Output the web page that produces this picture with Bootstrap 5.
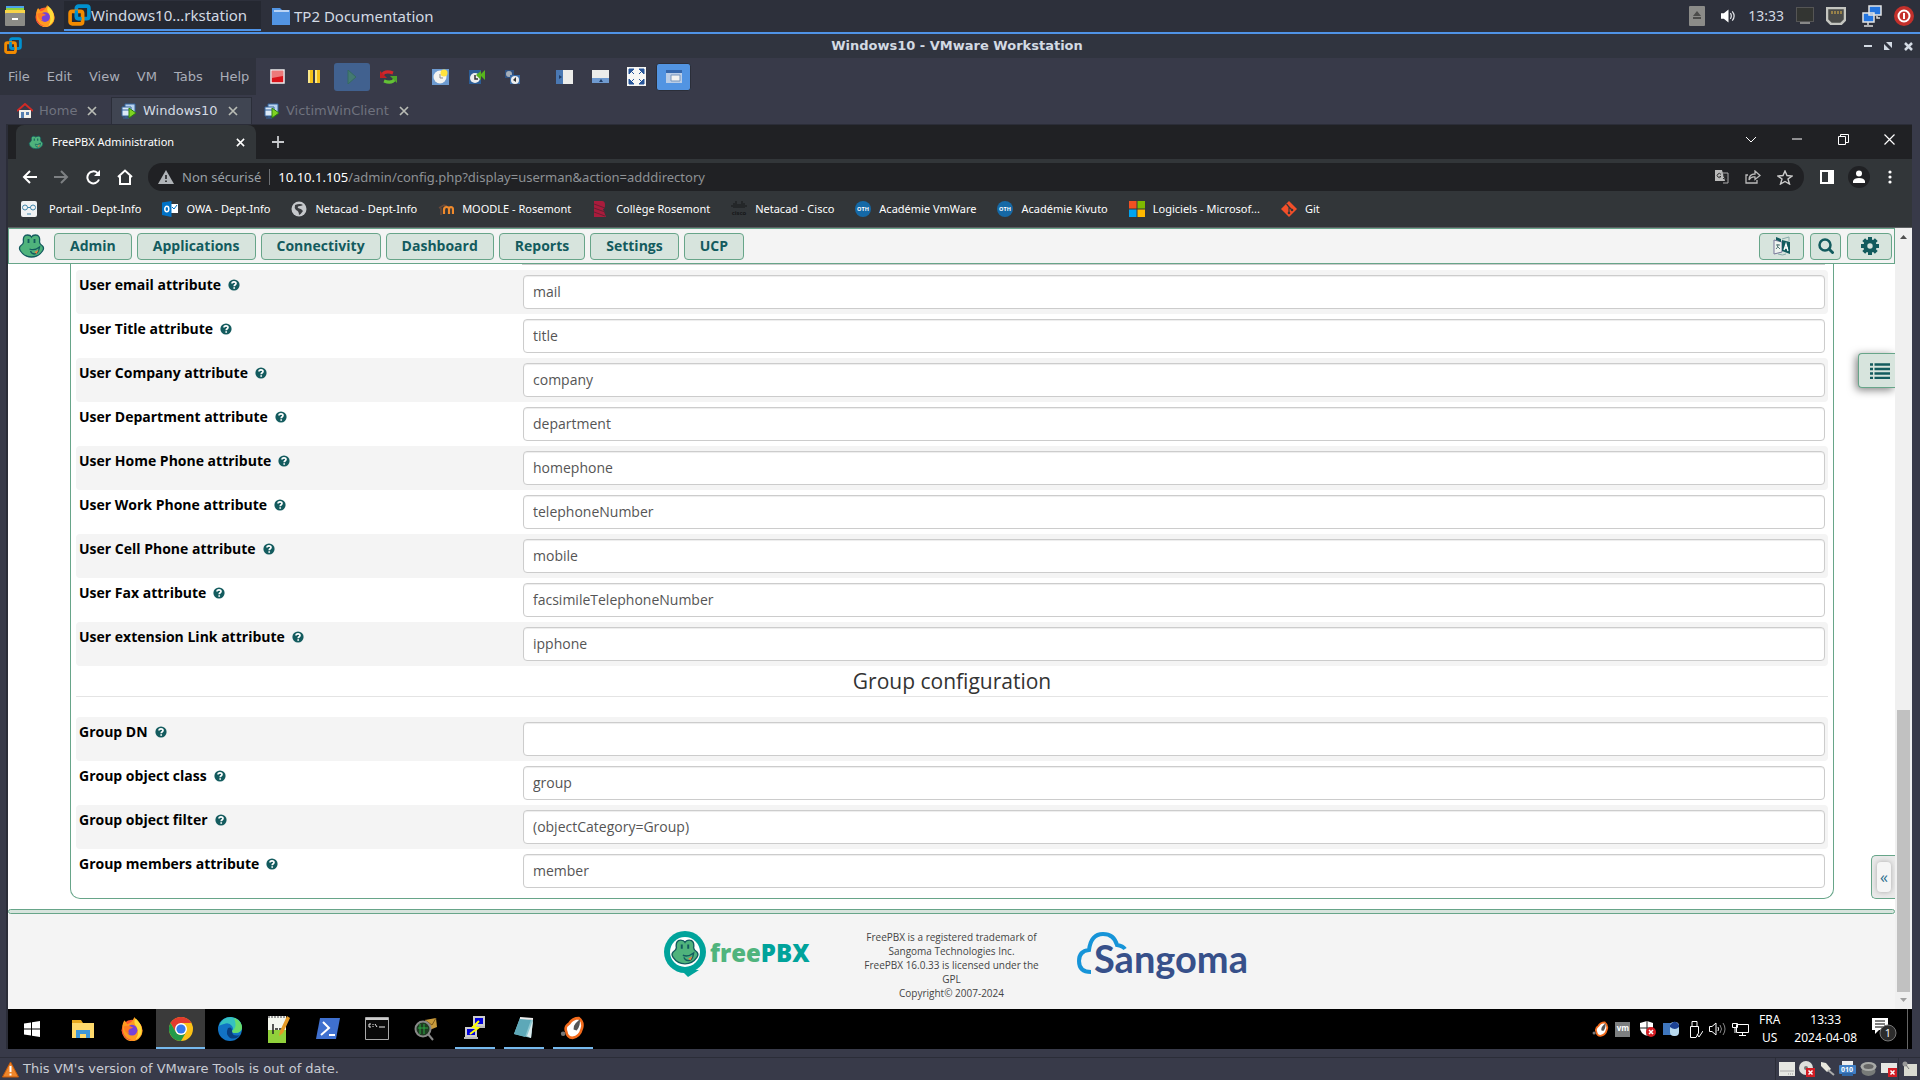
<!DOCTYPE html>
<html lang="fr">
<head>
<meta charset="utf-8">
<meta name="viewport" content="width=device-width, initial-scale=1">
<title>Windows10 - VMware Workstation</title>
<link href="https://cdn.jsdelivr.net/npm/bootstrap@5.3.0/dist/css/bootstrap.min.css" rel="stylesheet">
<style>
:root{--host:"DejaVu Sans",sans-serif;--web:"Open Sans","Noto Sans",sans-serif;--seg:"Noto Sans","Open Sans",sans-serif;--green:#67a589;--mint:#d7e4dd;--teal:#135b5e}
body{background:#383a49;font-family:var(--host);font-size:13px;line-height:20px;color:#d3dae3;overflow:hidden}
svg{display:block;flex:none}
a{color:inherit;text-decoration:none}
button{border:0;background:none;padding:0;color:inherit;font:inherit;display:flex;align-items:center;justify-content:center;flex:none}
.desk{min-height:100vh}
/* host panel */
.panel{height:34px;background:#2d303b;border-bottom:2px solid #4f93e6;font:15px/20px "Noto Sans",sans-serif;padding:0 6px 0 4px}
.panel time{font-size:14px}
.panel-task{width:197px;height:30px;background:#252831;border-bottom:2px solid #4f93e6;padding-left:4px}
.tray{gap:12px}
.titlebar{height:24px;background:#30343f;padding:0 7px 0 4px;font-weight:bold}
.titlebar span{padding-left:28px}
.menus{height:37px;width:256px;background:#2f323d;color:#a9adb8;padding-left:8px;gap:17px}
.tool{width:36px;height:28px;border-radius:3px}
.tool-run{background:#41618f;margin-left:2px}
.tool-on{background:#5294e2;border:1px solid #2b2e39;width:35px;margin-left:2px}
.tabs-vm{height:29px;padding-top:2px;color:#6f727e}
.vmtab{height:27px;gap:6px;padding-left:17px}
.vmtab:first-child{width:111px}
.vmtab button{margin-left:4px;color:#b9bcb5}
.vmtab-on{width:141px;background:#404552;border:1px solid #2b2e39;border-bottom:0;color:#d3dae3;padding-left:9px}
/* guest screen */
.guest{margin:0 8px 0 6px;border-left:2px solid #2b2d38;border-top:1px solid #2b2d38;font-family:var(--seg)}
.strip{height:34px;background:#202124;padding-left:8px;color:#fff;font-size:11px}
.ctab{width:240px;height:34px;background:#323639;border-radius:8px 8px 0 0;padding:0 11px 0 12px}
.wbtn{width:46px;height:28px}
.addr{height:36px;background:#323639;padding-left:11px;color:#fff}
.navbtn{width:20px;margin-right:12px}
.omni{height:28px;border-radius:14px;background:#202124;color:#9aa0a6;padding:0 11px 0 10px;margin-left:1px}
.omni-sep{border-left:1px solid #6c6f73;height:16px}
.omni-url{font:13px/20px var(--seg);color:#8e9195}
.avatar{margin:0 18px 0 14px}
.marks{height:33px;background:#323639;color:#fff;font-size:11px;padding:0 14px 4px 13px;gap:21px;border-bottom:1px solid #5d6063}
.marks a{display:flex;align-items:center;gap:8px;white-space:nowrap}
.view{background:#fff;color:#444;font:14px/20px var(--web);overflow:hidden}
.fnav{height:36px;background:#f4f4f4;border:1px solid var(--green);padding:0 2px 0 9px;gap:5px}
.fbtn{height:27px;border:1px solid var(--green);border-radius:4px;background:var(--mint);color:var(--teal);font-weight:700;padding:0 15px}
.fbtn-sq{padding:0;width:45px;margin-left:1px}
.fbtn-find{width:31px}
.sheet{padding:0 61px 0 62px}
.pane{border:1px solid var(--green);border-top:0;border-radius:0 0 10px 10px;padding:0 5px}
.frow{height:44px;border-radius:4px;color:#000}
.frow:nth-child(odd of .frow){background:#f4f4f4}
.frow label{font-weight:700;padding:5px 0 0 3px;display:flex;gap:7px;align-items:center;height:25px}
.frow .col-9{padding:5px 3px 0 9px}
.frow input{height:34px;border:1px solid #ccc;border-radius:4px;padding:5px 9px 7px;font:14px/20px var(--web);color:#555;box-shadow:inset 0 1px 1px rgba(0,0,0,.075)}
.cut{height:6px;padding:0 3px}
.cut div{border-bottom:1px solid #ccc;height:1px}
.gtitle{font-size:21px;font-weight:400;color:#333;border-bottom:1px solid #e4e4e4;height:31px;margin:0 0 20px;line-height:30px}
.pane::after{content:"";display:block;height:5px}
.band{height:5px;background:var(--mint);border:1px solid var(--green);border-radius:3px;margin-top:10px}
.foot{background:#f4f4f4;flex:1;padding:16px 0 0 8px}
.legal{width:180px;font-size:10px;line-height:14px;text-align:center;margin:0 35px 0 51px}
.sb{width:17px;background:#f0f0f0;padding:7px 2px}
.thumb{background:#c1c1c1;height:282px;margin-bottom:6px}
.listbtn{right:0;top:125px;width:37px;height:35px;border:1px solid var(--green);border-right:0;border-radius:4px 0 0 4px;background:var(--mint);color:var(--teal);box-shadow:-2px 2px 8px rgba(0,0,0,.5);padding-left:6px}
.side{right:0;bottom:110px;width:24px;height:44px;border:1px solid var(--green);border-right:0;border-radius:5px 0 0 5px;background:#e9e9e9}
.side button{width:14px;height:30px;border-radius:4px;background:#f5f5f5;color:#2c6f8e;margin:6px 5px;box-shadow:0 0 5px #aaa;font-size:16px}
.winbar{height:40px;background:#000;color:#fff;font-size:12px;line-height:18px}
.app{width:49px;height:40px;border-bottom:2px solid transparent;padding-top:2px}
.app-start{width:48px;margin-right:2px}
.app-open span{border-bottom:2px solid #76b9ed;width:40px;height:40px;display:flex;align-items:center;justify-content:center}
.app-on{background:#3a3a3a;border-bottom-color:#76b9ed}
.wintray{gap:6px}
.clock{margin-right:8px}
.peek{border-left:1px solid #666}
.status{height:23px;border-top:1px solid #2b2d38;margin-top:8px;padding:0 3px 0 2px;color:#c8ccd4}
.cellbox{border-left:1px solid #2b2d38;height:22px;gap:4px;padding-left:3px}
</style>
<script src="https://cdn.jsdelivr.net/npm/bootstrap@5.3.0/dist/js/bootstrap.bundle.min.js"></script>
</head>
<body>
<svg width="0" height="0" class="position-absolute" aria-hidden="true">
<defs>
<symbol id="q" viewBox="0 0 12 12"><circle cx="6" cy="6" r="5.6" fill="#135b5e"/><path d="M4 4.6C4 2.4 8 2.2 8 4.5 8 5.8 6.200 5.700 6.200 7.200M6.200 8.200v1.500" fill="none" stroke="#fff" stroke-width="1.700"/></symbol>
<symbol id="vmw" viewBox="0 0 22 22"><rect x="8" y="2" width="12" height="12" rx="2" fill="none" stroke="#0091d0" stroke-width="3.500"/><rect x="2" y="7" width="12" height="12" rx="2" fill="none" stroke="#f38b00" stroke-width="3.500"/><path d="M8 6v6q0 2 2 2h3" fill="none" stroke="#0091d0" stroke-width="3"/></symbol>
<symbol id="ff" viewBox="0 0 20 20"><circle cx="10" cy="11" r="8.700" fill="#ff5a2c"/><path d="M2 7Q3 3 4 3l2 3q4-1 6-6 1 3 4 5 4 5 2 10-2 4-6 5-6 1-9-4z" fill="#ff9a1f"/><path d="M13 1q6 5 5 12-1 4-5 6 4-6 0-12-2-3 0-6z" fill="#ffdc3a"/><circle cx="10" cy="11" r="4.500" fill="#7542d8"/><path d="M3 8q4-2 8 1l-3 1q-2 2 0 4-4 0-5-6z" fill="#ff7a24"/><path d="M2 12q1 7 9 7.500-7-1-9-7.500z" fill="#e5195f"/></symbol>
<symbol id="frog" viewBox="0 0 26 26"><path d="M5 9Q4 2 9 2q3 0 4 2 1-2 4-2 5 0 4 7 0 2 3 4 2 2 0 5-4 6-11 6T2 18q-2-3 0-5 3-2 3-4z" fill="#4fb37c" stroke="#135b5e" stroke-width="1.300"/><path d="M10 6v4M16 6v4" stroke="#135b5e" stroke-width="1.800"/><path d="M11 16q5 2 10-2-1 7-5 7-3 0-4-3" fill="none" stroke="#135b5e" stroke-width="1.300"/><path d="M16 19l4-2-2 4z" fill="#f08040"/></symbol>
<symbol id="vmrun" viewBox="0 0 16 16"><path d="M4 1h10v9H4z" fill="#b8d2ee" stroke="#34649e"/><path d="M1 4h9v9H1z" fill="#dbe9f7" stroke="#34649e"/><path d="M1 7h9M5 13v2M2 15h6" stroke="#34649e"/><path d="M8 5l7 5-7 5z" fill="#7fd321" stroke="#2c7d12"/></symbol>
<symbol id="x" viewBox="0 0 10 10"><path d="M1 1l8 8M9 1L1 9" fill="none" stroke="currentColor" stroke-width="1.700"/></symbol>
<symbol id="boar" viewBox="0 0 24 24"><path d="M6 15Q4 10 9 7q3-5 9-5 5 4 3 10-2 8-9 9-5 0-6-6z" fill="#fff" stroke="#f26a1b" stroke-width="2.500"/><path d="M15 7l4-4q1 6-3 11l-3-1q0-4 2-6z" fill="#555"/><circle cx="3" cy="17" r="2.200" fill="#777"/></symbol>
<symbol id="oth" viewBox="0 0 16 16"><circle cx="8" cy="8" r="8" fill="#1569a6"/><text x="8" y="10" text-anchor="middle" font-size="5.500" font-weight="700" font-family="Open Sans" fill="#fff">OTH</text></symbol>
</defs>
</svg>
<div class="desk d-flex flex-column">

<header class="panel d-flex align-items-center">
  <svg width="22" height="22" viewBox="0 0 22 22"><path d="M2 1h18v4H2z" fill="#4aa0e8"/><path d="M2 3h18v4H2z" fill="#8ed13f"/><path d="M1 5h20v5H1z" fill="#f7d348"/><rect x="1" y="8" width="20" height="13" rx="1" fill="#8b8b87"/><path d="M8 14h6" stroke="#fff" stroke-width="2"/></svg>
  <svg class="mx-2" width="22" height="22"><use href="#ff"/></svg>
  <a href="#" class="panel-task d-flex align-items-center"><svg width="23" height="23"><use href="#vmw"/></svg><span>Windows10...rkstation</span></a>
  <a href="#" class="d-flex align-items-center ms-2"><svg width="25" height="20" viewBox="0 0 25 20"><path d="M3 2h8l2 2h8v15H3z" fill="#5294e2"/><path d="M5 5h15" stroke="#dce9fa" stroke-width="1.500"/></svg><span>TP2 Documentation</span></a>
  <div class="tray ms-auto d-flex align-items-center">
    <svg width="16" height="20"><rect width="16" height="20" rx="1" fill="#8b8b88"/><path d="M4 10h8L8 5zM4 11h8v2H4z" fill="#4c4c4a"/></svg>
    <svg class="ms-1" width="15" height="14" viewBox="0 0 16 14"><path d="M0 4h3l5-4v14L3 10H0z" fill="#fff"/><path d="M10 4q2 3 0 6M12 2q4 5 0 10" fill="none" stroke="#e4e6ea" stroke-width="1.300"/></svg>
    <time>13:33</time>
    <svg width="18" height="18"><rect x=".5" y=".5" width="17" height="14" fill="#333532" stroke="#555"/><path d="M4 16h10" stroke="#888" stroke-width="2"/></svg>
    <svg width="20" height="18"><path d="M1 1h18v12l-4 4H5l-4-4z" fill="#4a4b49" stroke="#c4c5c0" stroke-width="2.500"/><path d="M6 4v3M9 4v3M12 4v3M15 4v3" stroke="#e5b94b"/></svg>
    <svg class="ms-1" width="20" height="22"><path d="M7 1h12v9H7zM1 8h11v9H1z" fill="#2475df" stroke="#e5e5e5" stroke-width="1.500"/><path d="M6 17v3M2 21h9M15 11v2h3" stroke="#ddd" stroke-width="1.500"/></svg>
    <svg width="20" height="22"><circle cx="10" cy="11" r="10" fill="#c4302b"/><circle cx="10" cy="11" r="5.500" fill="none" stroke="#fff" stroke-width="2"/><path d="M10 8v6" stroke="#fff" stroke-width="2"/></svg>
  </div>
</header>

<div class="titlebar d-flex align-items-center">
  <svg width="18" height="18"><use href="#vmw"/></svg>
  <span class="flex-fill text-center">Windows10 - VMware Workstation</span>
  <button aria-label="Minimize"><svg width="8" height="10"><path d="M0 5h8" stroke="#d3dae3" stroke-width="2"/></svg></button>
  <button class="ms-2 ps-1" aria-label="Restore"><svg width="8" height="8"><path d="M2 0h6v6zM0 2v6h6z" fill="#d3dae3"/></svg></button>
  <button class="ms-2 ps-1" aria-label="Close"><svg width="9" height="9"><path d="M1 1l7 7M8 1L1 8" stroke="#d3dae3" stroke-width="2.500"/></svg></button>
</div>

<div class="d-flex align-items-center">
  <nav class="menus d-flex align-items-center"><a href="#">File</a><a href="#">Edit</a><a href="#">View</a><a href="#">VM</a><a href="#">Tabs</a><a href="#">Help</a></nav>
  <button class="tool ms-1" aria-label="Stop"><svg width="16" height="16"><path d="M1 1h13v13H1z" fill="#d9131a" stroke="#eee" stroke-width="1.500"/><path d="M2 2h11v5l-11 2z" fill="#ec7a7a"/></svg></button>
  <button class="tool" aria-label="Pause"><svg width="14" height="14"><path d="M1 0h5v13H1zM8 0h5v13H8z" fill="#f5c21a"/><path d="M1 0h2v13H1zM8 0h2v13H8z" fill="#fbe88a"/></svg></button>
  <button class="tool tool-run" aria-label="Play"><svg width="10" height="14"><path d="M1 0l8 7-8 7z" fill="#447a71" stroke="#356a62"/></svg></button>
  <button class="tool" aria-label="Restart"><svg width="17" height="16" viewBox="0 0 17 16"><path d="M2 6q3-5 11-2" fill="none" stroke="#d3262b" stroke-width="3"/><path d="M0 2v7h7z" fill="#c11f24"/><path d="M15 10q-3 5-11 2" fill="none" stroke="#63c136" stroke-width="3"/><path d="M17 14V7h-7z" fill="#4fa52a"/></svg></button>
  <button class="tool ms-3" aria-label="Snapshot"><svg width="17" height="16"><path d="M0 0h17v16H0z" fill="#6d9bd1"/><circle cx="8" cy="8" r="6.500" fill="#f3f3f0"/><path d="M8 5v4h3" fill="none" stroke="#888"/><circle cx="12" cy="4" r="3.500" fill="#ffe23d"/></svg></button>
  <button class="tool" aria-label="Revert"><svg width="17" height="16"><path d="M1 1h12v14H1z" fill="#2c5d96"/><circle cx="7" cy="9" r="5" fill="#eee"/><path d="M7 6v4h3" fill="none" stroke="#333" stroke-width="1.500"/><path d="M17 1v10l-4-4v4L8 6l5-4v3z" fill="#57b51d"/></svg></button>
  <button class="tool" aria-label="Snapshots"><svg width="17" height="16"><path d="M1 1h9v8H1z" fill="#2c4f80"/><circle cx="5" cy="5" r="3" fill="#a5aeb8"/><path d="M6 6h10v9H6z" fill="#3a6ca8"/><circle cx="11" cy="11" r="4" fill="#eee"/><path d="M12 8l-3 3 3 2z" fill="#333"/></svg></button>
  <button class="tool ms-3" aria-label="Library"><svg width="17" height="14"><path d="M0 0h7v14H0z" fill="#4a78b3"/><path d="M7 0h10v14H7z" fill="#ececea"/><path d="M3 5l3 2-3 2z" fill="#203c65"/></svg></button>
  <button class="tool" aria-label="Thumbnails"><svg width="17" height="14"><path d="M0 0h17v8H0z" fill="#ececea"/><path d="M0 8h17v5H0z" fill="#6f9ad0"/><path d="M7 12h4l-2-3z" fill="#203c65"/></svg></button>
  <button class="tool" aria-label="Full screen"><svg width="19" height="19"><path d="M0 0h19v19H0z" fill="#f7f7f5"/><path d="M2 2h5L2 7zM17 2v5l-5-5zM2 17v-5l5 5zM17 17h-5l5-5zM4 4l3 3M15 4l-3 3M4 15l3-3M15 15l-3-3" fill="#28579b" stroke="#28579b"/></svg></button>
  <button class="tool tool-on" aria-label="Unity"><svg width="16" height="13"><path d="M0 0h16v13H0z" fill="#b9cce6"/><path d="M0 0h16v3H0z" fill="#3567ac"/><path d="M5 5h9v6H5z" fill="#f3f3f0" stroke="#7795bd"/></svg></button>
</div>

<div class="tabs-vm d-flex">
  <div class="vmtab d-flex align-items-center"><svg width="16" height="16"><path d="M2 7h12v8H2z" fill="#f2f0ea"/><path d="M0 8l8-7 8 7" fill="none" stroke="#d02a26" stroke-width="2"/><path d="M4 9h3v6H4zM9 9h3v3H9z" fill="#567fb0"/></svg><span>Home</span><button aria-label="Close Home"><svg width="10" height="10"><use href="#x"/></svg></button></div>
  <div class="vmtab vmtab-on d-flex align-items-center"><svg width="16" height="16"><use href="#vmrun"/></svg><span>Windows10</span><button aria-label="Close Windows10"><svg width="10" height="10"><use href="#x"/></svg></button></div>
  <div class="vmtab d-flex align-items-center ps-2 ms-1"><svg width="16" height="16"><use href="#vmrun"/></svg><span>VictimWinClient</span><button aria-label="Close VictimWinClient"><svg width="10" height="10"><use href="#x"/></svg></button></div>
</div>

<main class="guest d-flex flex-column flex-fill">
  <div class="strip d-flex align-items-center">
    <div class="ctab d-flex align-items-center"><svg width="16" height="15"><use href="#frog"/></svg><span class="ps-2 flex-fill">FreePBX Administration</span><button aria-label="Close tab"><svg width="9" height="9"><use href="#x"/></svg></button></div>
    <button class="ms-3" aria-label="New tab"><svg width="12" height="12"><path d="M6 0v12M0 6h12" stroke="#c8cacd" stroke-width="1.800"/></svg></button>
    <div class="ms-auto d-flex align-self-start">
      <button class="wbtn" aria-label="Search tabs"><svg width="10" height="7"><path d="M0 1l5 5 5-5" fill="none" stroke="#fff"/></svg></button>
      <button class="wbtn" aria-label="Minimize window"><svg width="10" height="2"><path d="M0 1h10" stroke="#fff"/></svg></button>
      <button class="wbtn" aria-label="Restore window"><svg width="11" height="11"><path d="M.5 2.500h7v8h-7zM2.500 2.500v-2h8v8h-3" fill="none" stroke="#fff"/></svg></button>
      <button class="wbtn" aria-label="Close window"><svg width="11" height="11"><path d="M.5.5l10 10M10.500.5l-10 10" stroke="#fff" stroke-width="1.200"/></svg></button>
    </div>
  </div>
  <div class="addr d-flex align-items-center">
    <button class="navbtn" aria-label="Back"><svg width="15" height="14"><path d="M15 7H2M8 1L2 7l6 6" fill="none" stroke="#fff" stroke-width="2"/></svg></button>
    <button class="navbtn" aria-label="Forward"><svg width="15" height="14"><path d="M0 7h13M7 1l6 6-6 6" fill="none" stroke="#7d8083" stroke-width="2"/></svg></button>
    <button class="navbtn" aria-label="Reload"><svg width="16" height="16"><path d="M14 10.500A6 6 0 1 1 12.500 4" fill="none" stroke="#fff" stroke-width="2"/><path d="M15 1v6H9z" fill="#fff"/></svg></button>
    <button class="navbtn" aria-label="Home"><svg width="16" height="16"><path d="M1 8l7-6.500L15 8M3 7v8h10V7" fill="none" stroke="#fff" stroke-width="2"/></svg></button>
    <div class="omni d-flex align-items-center flex-fill">
      <svg width="16" height="14"><path d="M8 0l8 14H0z" fill="#b0b4b8"/><path d="M8 5v4M8 10.500v1.500" stroke="#202124" stroke-width="1.600"/></svg>
      <span class="ps-2 pe-2">Non sécurisé</span><span class="omni-sep pe-2"></span>
      <span class="omni-url flex-fill"><span class="text-white">10.10.1.105</span>/admin/config.php?display=userman&amp;action=adddirectory</span>
      <button aria-label="Translate"><svg width="14" height="14"><path d="M0 0h7l3 11H0z" fill="#bbb"/><path d="M6 3h7v10H8" fill="none" stroke="#aaa"/><path d="M6 4.500a2 2 0 1 0 0 2H4.500M8 6h4M10 5q0 3-2 4M9 7l3 3" fill="none" stroke="#333"/></svg></button>
      <button class="ms-3" aria-label="Share"><svg width="16" height="14"><path d="M3 5H1v8h11v-3" fill="none" stroke="#bbb" stroke-width="1.300"/><path d="M4 10q0-6 6-6V1l5 4.500-5 4V7q-4-1-6 3z" fill="none" stroke="#bbb" stroke-width="1.300"/></svg></button>
      <button class="ms-3" aria-label="Bookmark"><svg width="16" height="15"><path d="M8 1l2 4.500 5 .5-4 3 1.500 5L8 11.500 3.500 14 5 9 1 6l5-.5z" fill="none" stroke="#ccc" stroke-width="1.400"/></svg></button>
    </div>
    <button class="ms-3" aria-label="Side panel"><svg width="14" height="14"><path d="M1 1h12v12H1z" fill="none" stroke="#fff" stroke-width="2"/><path d="M8 1h5v12H8z" fill="#fff"/></svg></button>
    <button class="avatar" aria-label="Profile"><svg width="22" height="22"><circle cx="11" cy="11" r="11" fill="#202124"/><circle cx="11" cy="7.500" r="3" fill="#fff"/><path d="M5 17v-2q1-3 6-3t6 3v2z" fill="#fff"/></svg></button>
    <button class="me-3 pe-1" aria-label="Menu"><svg width="4" height="16"><g fill="#fff"><circle cx="2" cy="3" r="1.600"/><circle cx="2" cy="8" r="1.600"/><circle cx="2" cy="13" r="1.600"/></g></svg></button>
  </div>
  <nav class="marks d-flex align-items-center">
    <a href="#"><svg width="16" height="16"><rect width="16" height="16" rx="2" fill="#f0f2f3"/><g fill="none" stroke="#3f86ab"><circle cx="4" cy="6.500" r="2.500"/><circle cx="12" cy="6.500" r="2.500"/><path d="M6.500 6.500h3M6 13h4"/></g></svg><span class="ps-1">Portail - Dept-Info</span></a>
    <a href="#"><svg width="16" height="16"><path d="M7 3h9v9H7z" fill="#fff"/><path d="M0 1.500L9.500 0v16L0 14z" fill="#0072c6"/><path d="M10 6l2 2 3-4" fill="none" stroke="#0072c6"/><ellipse cx="4.800" cy="8" rx="2" ry="2.700" fill="none" stroke="#fff" stroke-width="1.500"/></svg>OWA - Dept-Info</a>
    <a href="#"><svg width="16" height="16"><circle cx="8" cy="8" r="7.500" fill="#c5c8cb"/><path d="M4 4q5-2 8 0-2 1-3 1-3 0-2 2 4 1 5 3-2 3-4 4 0-4-3-5-2-2-1-5z" fill="#3a3d40"/></svg>Netacad - Dept-Info</a>
    <a href="#"><svg width="16" height="16"><path d="M1 7l5-3 3 1M3 7v7" fill="none" stroke="#6a4a3a" stroke-width="1.500"/><path d="M6 13V9q0-3 2.500-3T11 8v5M11 9q0-3 2-3t2 3v4" fill="none" stroke="#f08a2c" stroke-width="2.200"/></svg>MOODLE - Rosemont</a>
    <a href="#"><svg width="16" height="16"><path d="M2 0h8q3 0 3 4t-2 4l3 8H2z" fill="#a91c3c"/><path d="M2 3l11 4M2 7l11 4M2 11l11 4" stroke="#681f33"/></svg>Collège Rosemont</a>
    <a href="#"><svg width="16" height="16"><path d="M1 4v2M3 2v5M5 0v7M7 3v4M9 3v4M11 0v7M13 2v5M15 4v2" stroke="#16181a"/><text x="8" y="14" font-size="6" font-weight="700" font-family="Open Sans" text-anchor="middle" fill="#16181a">cisco</text></svg>Netacad - Cisco</a>
    <a href="#"><svg width="16" height="16"><use href="#oth"/></svg>Académie VmWare</a>
    <a href="#"><svg width="16" height="16"><use href="#oth"/></svg>Académie Kivuto</a>
    <a href="#"><svg width="16" height="16"><path d="M0 0h7.500v7.500H0z" fill="#f25022"/><path d="M8.500 0H16v7.500H8.500z" fill="#7fba00"/><path d="M0 8.500h7.500V16H0z" fill="#00a4ef"/><path d="M8.500 8.500H16V16H8.500z" fill="#ffb900"/></svg>Logiciels - Microsof...</a>
    <a href="#"><svg width="16" height="16"><path d="M8 0l8 8-8 8-8-8z" fill="#f34f29"/><path d="M5.500 3l2.500 3v6M8 6l3 3" stroke="#323639" fill="none" stroke-width="1.200"/><circle cx="8" cy="12" r="1.300" fill="#323639"/><circle cx="11" cy="9" r="1.300" fill="#323639"/></svg>Git</a>
  </nav>

  <div class="d-flex flex-fill">
    <div class="view position-relative d-flex flex-column flex-fill">
      <nav class="fnav d-flex align-items-center">
        <svg class="me-1" width="27" height="26"><use href="#frog"/></svg>
        <button class="fbtn">Admin</button><button class="fbtn">Applications</button><button class="fbtn">Connectivity</button><button class="fbtn">Dashboard</button><button class="fbtn">Reports</button><button class="fbtn">Settings</button><button class="fbtn">UCP</button>
        <button class="fbtn fbtn-sq ms-auto" aria-label="Language"><svg width="18" height="20"><path d="M1 4l8 2v10l-8 2z" fill="#eef3ef" stroke="#779"/><path d="M3 1l5 2v3L3 4zM9 4l8 2v12l-8-3z" fill="#135b5e"/><path d="M3 9h4M5 8q0 4-2 5M4 10l3 3" fill="none" stroke="#577"/><path d="M11 14l2-6 2 7M12 12h3" fill="none" stroke="#fff" stroke-width="1.300"/><path d="M5 18q5 2 8 0M9 3l7-2v4" fill="none" stroke="#8aa"/></svg></button>
        <button class="fbtn fbtn-sq fbtn-find" aria-label="Search"><svg width="16" height="16"><circle cx="7" cy="7" r="5.500" fill="none" stroke="#135b5e" stroke-width="2.500"/><path d="M11 11l4.500 4.500" stroke="#135b5e" stroke-width="2.800"/></svg></button>
        <button class="fbtn fbtn-sq" aria-label="Settings menu"><svg width="18" height="18" viewBox="-9 -9 18 18"><circle r="4.700" fill="none" stroke="#135b5e" stroke-width="4"/><g stroke="#135b5e" stroke-width="4"><path d="M0-9v4M0 9V5M-9 0h4M9 0H5M-6.300-6.300l3 3M6.300-6.300l-3 3M-6.300 6.300l3-3M6.300 6.300l-3-3"/></g></svg></button>
      </nav>
      <form class="sheet"><div class="pane">
        <div class="row g-0"><div class="col-9 offset-3 cut ps-2"><div></div></div></div>
        <div class="row g-0 frow"><div class="col-3"><label for="a1">User email attribute <svg width="12" height="12"><use href="#q"/></svg></label></div><div class="col-9"><input id="a1" class="w-100" value="mail"></div></div>
        <div class="row g-0 frow"><div class="col-3"><label for="a2">User Title attribute <svg width="12" height="12"><use href="#q"/></svg></label></div><div class="col-9"><input id="a2" class="w-100" value="title"></div></div>
        <div class="row g-0 frow"><div class="col-3"><label for="a3">User Company attribute <svg width="12" height="12"><use href="#q"/></svg></label></div><div class="col-9"><input id="a3" class="w-100" value="company"></div></div>
        <div class="row g-0 frow"><div class="col-3"><label for="a4">User Department attribute <svg width="12" height="12"><use href="#q"/></svg></label></div><div class="col-9"><input id="a4" class="w-100" value="department"></div></div>
        <div class="row g-0 frow"><div class="col-3"><label for="a5">User Home Phone attribute <svg width="12" height="12"><use href="#q"/></svg></label></div><div class="col-9"><input id="a5" class="w-100" value="homephone"></div></div>
        <div class="row g-0 frow"><div class="col-3"><label for="a6">User Work Phone attribute <svg width="12" height="12"><use href="#q"/></svg></label></div><div class="col-9"><input id="a6" class="w-100" value="telephoneNumber"></div></div>
        <div class="row g-0 frow"><div class="col-3"><label for="a7">User Cell Phone attribute <svg width="12" height="12"><use href="#q"/></svg></label></div><div class="col-9"><input id="a7" class="w-100" value="mobile"></div></div>
        <div class="row g-0 frow"><div class="col-3"><label for="a8">User Fax attribute <svg width="12" height="12"><use href="#q"/></svg></label></div><div class="col-9"><input id="a8" class="w-100" value="facsimileTelephoneNumber"></div></div>
        <div class="row g-0 frow"><div class="col-3"><label for="a9">User extension Link attribute <svg width="12" height="12"><use href="#q"/></svg></label></div><div class="col-9"><input id="a9" class="w-100" value="ipphone"></div></div>
        <section>
        <h3 class="gtitle text-center">Group configuration</h3>
        <div class="row g-0 frow"><div class="col-3"><label for="b1">Group DN <svg width="12" height="12"><use href="#q"/></svg></label></div><div class="col-9"><input id="b1" class="w-100" value=""></div></div>
        <div class="row g-0 frow"><div class="col-3"><label for="b2">Group object class <svg width="12" height="12"><use href="#q"/></svg></label></div><div class="col-9"><input id="b2" class="w-100" value="group"></div></div>
        <div class="row g-0 frow"><div class="col-3"><label for="b3">Group object filter <svg width="12" height="12"><use href="#q"/></svg></label></div><div class="col-9"><input id="b3" class="w-100" value="(objectCategory=Group)"></div></div>
        <div class="row g-0 frow"><div class="col-3"><label for="b4">Group members attribute <svg width="12" height="12"><use href="#q"/></svg></label></div><div class="col-9"><input id="b4" class="w-100" value="member"></div></div>
        </section>
      </div></form>
      <div class="band"></div>
      <footer class="foot d-flex justify-content-center align-items-start">
        <svg width="148" height="50"><circle cx="22" cy="22" r="21" fill="#00a39b"/><path d="M18 40h18L25 47z" fill="#00a39b"/><circle cx="22" cy="22" r="15" fill="#fff"/><svg x="8" y="8" width="28" height="28"><use href="#frog"/></svg><text x="47" y="32" font-family="Open Sans" font-size="24" font-weight="800" fill="#50b47d">free<tspan fill="#00a39b">PBX</tspan></text></svg>
        <div class="legal">FreePBX is a registered trademark of Sangoma Technologies Inc.<br>FreePBX 16.0.33 is licensed under the GPL<br>Copyright© 2007-2024</div>
        <svg width="172" height="56"><path d="M14 42Q2 42 2 31 2 21 12 20 14 4 26 4 37 4 40 15q6 1 8 4" fill="none" stroke="#1694d8" stroke-width="4"/><text x="17" y="43" font-family="Lato" font-size="38" font-weight="700" fill="#37508a">Sangoma</text></svg>
      </footer>
      <button class="listbtn position-absolute" aria-label="Directories"><svg width="20" height="16"><path d="M0 1.500h3M0 6h3M0 10.500h3M0 15h3M4.500 1.500H20M4.500 6H20M4.500 10.500H20M4.500 15H20" stroke="#135b5e" stroke-width="2.600"/></svg></button>
      <div class="side position-absolute"><button aria-label="Expand">«</button></div>
    </div>
    <div class="sb d-flex flex-column align-items-center">
      <svg width="7" height="4"><path d="M0 4h7L3.500 0z" fill="#505050"/></svg>
      <div class="thumb w-100 mt-auto"></div>
      <svg width="7" height="4"><path d="M0 0h7L3.500 4z" fill="#a0a0a0"/></svg>
    </div>
  </div>

  <div class="winbar d-flex">
    <button class="app app-start" aria-label="Start"><svg width="16" height="16"><path d="M0 2.500L7 1.500v6H0zM8 1.300L16 0v7.500H8zM0 8.500h7v6l-7-1zM8 8.500h8V16l-8-1.200z" fill="#fff"/></svg></button>
    <button class="app" aria-label="Files"><svg width="22" height="20"><path d="M0 1h9l2 3h11v15H0z" fill="#e8a91f"/><path d="M0 4h22v15H0z" fill="#ffd96b"/><path d="M4 19v-8h14v8h-4v-4H8v4z" fill="#3f97d8"/></svg></button>
    <button class="app" aria-label="Firefox"><svg width="24" height="24"><use href="#ff"/></svg></button>
    <button class="app app-on" aria-label="Chrome"><svg width="24" height="24" viewBox="-12 -12 24 24"><circle r="12" fill="#fbc116"/><path d="M0-6H10.400A12 12 0 0 0-10.400-6L-5.200 3z" fill="#e33b2e"/><path d="M-10.400-6A12 12 0 0 0 0 12L5.200 3A6 6 0 0 1-5.200 3z" fill="#229a49"/><circle r="6" fill="#fff"/><circle r="4.600" fill="#3579ec"/></svg></button>
    <button class="app" aria-label="Edge"><svg width="24" height="24"><circle cx="12" cy="12" r="12" fill="#1273c4"/><path d="M1 9Q4 0 13 0q10 1 11 10 0 6-7 6-3 0-3-2 2-2 0-5-3-4-8-2-4 1-5 2z" fill="#35c1c0"/><path d="M16 1q8 3 8 10-1 5-7 5-3 0-3-2 6-4 2-13z" fill="#68dc6b"/><path d="M14 14q0 6 8 4-4 5-10 3-5-4-2-10 4-2 4 3z" fill="#083f80"/></svg></button>
    <button class="app" aria-label="Notepad++"><svg width="24" height="28" viewBox="0 -2 24 28"><path d="M1-1h18v27H1z" fill="#f4f7ee"/><path d="M1 13h18v13H1z" fill="#91d13b"/><path d="M1 0h18" stroke="#999" stroke-width="2" stroke-dasharray="2 1"/><path d="M6 7v10M8 12h3M12 12h3" stroke="#222" stroke-width="1.500"/><path d="M20-1l3 2-7 15-4 3 1-5z" fill="#e69a25"/></svg></button>
    <button class="app" aria-label="PowerShell"><svg width="24" height="24"><path d="M4 1h20l-4 21H0z" fill="#3f70cf"/><path d="M7 5l6 6-8 7M13 18h6" fill="none" stroke="#fff" stroke-width="2"/></svg></button>
    <button class="app" aria-label="Terminal"><svg width="24" height="24"><path d="M.5.5h23v22H.5z" fill="#0a0a0a" stroke="#aaa"/><path d="M1 2h22" stroke="#ccc" stroke-width="2"/><path d="M6 7H4v3h2M8 7v1M8 9v1M10 7l2 3M14 10h6" fill="none" stroke="#eee"/></svg></button>
    <button class="app" aria-label="Directory tool"><svg width="24" height="24"><path d="M11 3l11-2 1 9-10 4z" fill="#c99b3c"/><path d="M11 3l7 5 4-7" fill="none" stroke="#7c581a"/><circle cx="9" cy="12" r="7.500" fill="#1e3b22" stroke="#888" stroke-width="2"/><path d="M6 7v10M10 7v10M4 11h10" stroke="#2ba843"/><path d="M14 17l5 6" stroke="#888" stroke-width="2"/></svg></button>
    <button class="app app-open" aria-label="PuTTY"><span><svg width="24" height="24"><path d="M11 1h10v8H11zM3 12h10v8H3z" fill="#00d" stroke="#ccc" stroke-width="2"/><path d="M11 11h11M1 22h14" stroke="#bbb" stroke-width="2"/><path d="M16 5l-6 6 5 1-8 6" fill="none" stroke="#ff0" stroke-width="2"/></svg></span></button>
    <button class="app app-open" aria-label="Notepad"><span><svg width="24" height="24"><path d="M8 2l13 2-2 18L2 18z" fill="#8cc7d1"/><path d="M8 2l11 2-6 17L2 18z" fill="#5da8b8"/><path d="M8 2l13 1" stroke="#eee" stroke-width="2"/><path d="M21 4l-2 18-4-2z" fill="#dcebed"/></svg></span></button>
    <button class="app app-open" aria-label="Boar tool"><span><svg width="25" height="25"><use href="#boar"/></svg></span></button>
    <div class="wintray ms-auto d-flex align-items-center">
      <svg width="17" height="17"><use href="#boar"/></svg>
      <svg width="15" height="15"><path d="M0 0h15v15H0z" fill="#7d7f80"/><text x="8" y="9" text-anchor="middle" font-family="Open Sans" font-size="8" font-weight="700" fill="#fff">vm</text></svg>
      <svg class="ms-1" width="17" height="17"><path d="M7 0l6 2v5q0 5-6 8-7-3-7-8V2z" fill="#fff"/><path d="M7 0v15M0 7h13" stroke="#222"/><circle cx="11" cy="11" r="5" fill="#d51b22"/><path d="M9 9l4 4M13 9l-4 4" stroke="#fff" stroke-width="1.500"/></svg>
      <svg width="16" height="16"><path d="M0 2h9v12H0z" fill="#3f76bd"/><rect x="7" y="1" width="9" height="14" rx="4" fill="#b9d9ee"/><path d="M7 6q5 4 9 0V4Q12-3 7 4z" fill="#1d4293"/></svg>
      <svg class="ms-1" width="14" height="17"><path d="M1.500 5.500h8V12L7 16.500H1.500zM3 5V.500h5V5M8 13l2 3 4-6" fill="none" stroke="#fff"/></svg>
      <svg width="17" height="14"><path d="M.5 4.500H3l4-3.500v12L3 9.500H.5zM9 5q1 2 0 4" fill="none" stroke="#fff"/><path d="M11 3q3 4 0 8M14 1q4 6 0 12" fill="none" stroke="#888"/></svg>
      <svg width="17" height="14"><path d="M4.500 2.500h12v8h-12zM7 13.500h7M10.500 10v3M.5 1.500h5v4h-5zM3 6v5" fill="none" stroke="#fff"/></svg>
      <div class="text-center ps-1">FRA<br>US</div>
      <div class="clock text-center ps-2">13:33<br>2024-04-08</div>
      <button aria-label="Notifications"><svg width="26" height="25"><path d="M1 1h16v12H8l-4 4v-4H1z" fill="#fff"/><path d="M4 4h10M4 7h10M4 10h8" stroke="#000"/><circle cx="17" cy="16" r="8" fill="#2b2b2b" stroke="#777"/><text x="17" y="20" text-anchor="middle" font-family="Open Sans" font-size="11" fill="#fff">1</text></svg></button>
      <div class="peek h-100 ms-1 pe-1"></div>
    </div>
  </div>
</main>

<footer class="status d-flex align-items-center">
  <svg width="17" height="17"><path d="M8.500 1l8 15H.5z" fill="#f0862a" stroke="#c65a0c"/><path d="M8.500 5v6M8.500 12.500v2" stroke="#fff" stroke-width="2"/></svg>
  <span class="flex-fill ps-1">This VM's version of VMware Tools is out of date.</span>
  <div class="cellbox d-flex align-items-center">
    <svg width="16" height="14"><path d="M0 0h16v14H0z" fill="#e6e7e3"/><path d="M1 9h14" stroke="#aaa"/><path d="M9 12h5" stroke="#999" stroke-dasharray="1 1"/></svg>
    <svg width="16" height="16"><circle cx="7" cy="7" r="7" fill="#dfe0dc"/><circle cx="7" cy="7" r="2" fill="#777"/><path d="M7 7h9v9H7z" fill="#d21d25"/><path d="M9.500 9.500l4 4M13.500 9.500l-4 4" stroke="#fff" stroke-width="1.500"/></svg>
    <svg width="16" height="16"><path d="M2 1l5 1 5 6-4 3-6-6z" fill="#e8e6dd"/><path d="M9 9l6 5" stroke="#aaa" stroke-width="2"/></svg>
    <svg width="17" height="16"><path d="M3 0h11v5H3z" fill="#eee"/><rect y="4" width="17" height="9" rx="1" fill="#3f7fc6"/><path d="M3 12h11v3H3z" fill="#2f66a5"/><text x="8" y="11" text-anchor="middle" font-family="Open Sans" font-size="7" font-weight="700" fill="#fff">010</text></svg>
    <svg width="17" height="16"><ellipse cx="8.500" cy="10" rx="7" ry="5" fill="#777a78"/><ellipse cx="8.500" cy="5.500" rx="8" ry="4.500" fill="#a8aaa7"/><ellipse cx="8.500" cy="5.500" rx="5" ry="2.500" fill="#666"/></svg>
    <svg width="17" height="16"><path d="M0 2h16v10H0z" fill="#e6e7e3"/><path d="M7 7h9v9H7z" fill="#d21d25"/><path d="M9.500 9.500l4 4M13.500 9.500l-4 4" stroke="#fff" stroke-width="1.500"/></svg>
  </div>
  <div class="cellbox d-flex align-items-center"><svg width="15" height="16"><path d="M2 3h13v12H2z" fill="#d9dad0"/><circle cx="3" cy="3" r="2.500" fill="#999"/><path d="M4 4l3 4" stroke="#777"/></svg></div>
</footer>
</div>
</body>
</html>
